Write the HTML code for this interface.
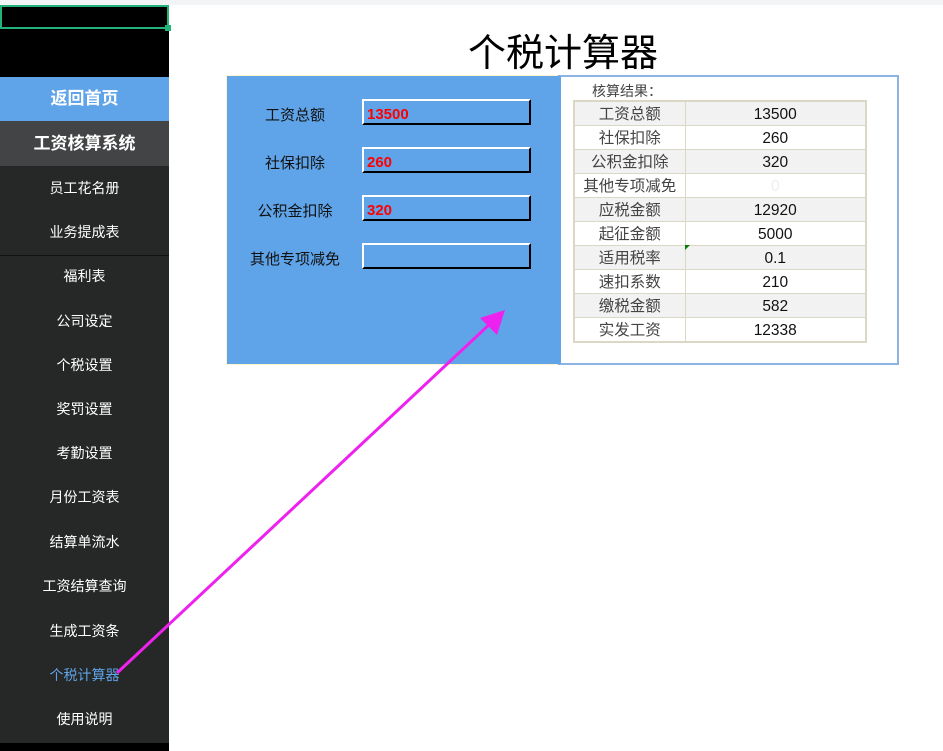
<!DOCTYPE html>
<html><head><meta charset="utf-8"><style>
*{margin:0;padding:0;box-sizing:border-box}
body{width:943px;height:751px;position:relative;background:#fff;overflow:hidden;font-family:"Liberation Sans","Noto Sans CJK SC",sans-serif}
.top{position:absolute;left:0;top:0;width:943px;height:5px;background:#f3f4f6}
.side{position:absolute;left:0;top:5px;width:169px;height:746px;background:#262727}
.blk{position:absolute;left:0;top:5px;width:169px;height:72px;background:#000}
.sel{position:absolute;left:0;top:5px;width:169px;height:24px;border:2px solid #21b37a}
.sel:after{content:"";position:absolute;right:-4px;bottom:-4px;width:6px;height:6px;background:#21b37a}
.home{position:absolute;left:0;top:77px;width:169px;height:44px;background:#5fa4e8;color:#fff;font-weight:bold;font-size:17px;text-align:center;line-height:44px}
.sys{position:absolute;left:0;top:121px;width:169px;height:45px;background:#434445;color:#fff;font-weight:bold;font-size:17px;text-align:center;line-height:45px}
.it{position:absolute;left:0;width:169px;text-align:center;color:#fff;font-size:14px;line-height:20px}
.sep{position:absolute;left:0;top:255px;width:169px;height:1px;background:#111}
.bot{position:absolute;left:0;top:743px;width:169px;height:8px;background:#000}
.title{position:absolute;left:420px;top:31px;width:286px;text-align:center;font-size:38px;line-height:46px;color:#000}
.panel{position:absolute;left:226px;top:75px;width:334px;height:290px;background:#5fa4e8;border:1px solid #fff3c8}
.lab{position:absolute;width:130px;text-align:center;font-size:15px;color:#111;left:230px}
.inp{position:absolute;left:362px;width:169px;height:26px;border-top:2px solid #fff;border-left:2px solid #fff;border-right:2px solid #000;border-bottom:2px solid #000;color:#f00;font-weight:bold;font-size:15px;padding-left:3px;padding-top:3px;line-height:22px}
.res{position:absolute;left:558px;top:75px;width:341px;height:290px;border:2px solid #8db3e2;border-left:3px solid #5fa4e8;background:#fff}
.rl{position:absolute;left:592px;top:81px;font-size:14px;color:#444}
table{position:absolute;left:573px;top:100px;border-collapse:collapse;border:2px solid #dbd7c6}
td{border:1px solid #dbd7c6;height:24px;font-size:15.5px;text-align:center;padding:2px 0 0 0;line-height:21px}
td.a{width:111px;color:#444}
td.b{width:181px;color:#111}
tr:nth-child(odd) td{background:#f2f2f2}
</style></head><body>
<div class="top"></div>
<div class="side"></div>
<div class="blk"></div>
<div class="sel"></div>
<div class="home">返回首页</div>
<div class="sys">工资核算系统</div>
<div class="it" style="top:178px">员工花名册</div>
<div class="it" style="top:222px">业务提成表</div>
<div class="sep"></div>
<div class="it" style="top:266px">福利表</div>
<div class="it" style="top:311px">公司设定</div>
<div class="it" style="top:355px">个税设置</div>
<div class="it" style="top:399px">奖罚设置</div>
<div class="it" style="top:443px">考勤设置</div>
<div class="it" style="top:487px">月份工资表</div>
<div class="it" style="top:532px">结算单流水</div>
<div class="it" style="top:576px">工资结算查询</div>
<div class="it" style="top:621px">生成工资条</div>
<div class="it" style="top:665px;color:#5fa4e8">个税计算器</div>
<div class="it" style="top:709px">使用说明</div>
<div class="bot"></div>
<div class="title">个税计算器</div>
<div class="panel"></div>
<div class="lab" style="top:104px">工资总额</div>
<div class="lab" style="top:152px">社保扣除</div>
<div class="lab" style="top:200px">公积金扣除</div>
<div class="lab" style="top:248px">其他专项减免</div>
<div class="inp" style="top:99px">13500</div>
<div class="inp" style="top:147px">260</div>
<div class="inp" style="top:195px">320</div>
<div class="inp" style="top:243px"></div>
<div class="res"></div>
<div class="rl">核算结果：</div>
<table>
<tr><td class="a">工资总额</td><td class="b">13500</td></tr>
<tr><td class="a">社保扣除</td><td class="b">260</td></tr>
<tr><td class="a">公积金扣除</td><td class="b">320</td></tr>
<tr><td class="a">其他专项减免</td><td class="b" style="color:#eee">0</td></tr>
<tr><td class="a">应税金额</td><td class="b">12920</td></tr>
<tr><td class="a">起征金额</td><td class="b">5000</td></tr>
<tr><td class="a">适用税率</td><td class="b" style="position:relative">0.1<span style="position:absolute;left:-1px;top:-1px;width:0;height:0;border-top:5px solid #0a7a0a;border-right:5px solid transparent"></span></td></tr>
<tr><td class="a">速扣系数</td><td class="b">210</td></tr>
<tr><td class="a">缴税金额</td><td class="b">582</td></tr>
<tr><td class="a">实发工资</td><td class="b">12338</td></tr>
</table>
<svg style="position:absolute;left:0;top:0" width="943" height="751">
<line x1="117" y1="673" x2="492" y2="322" stroke="#ee22ee" stroke-width="3"/>
<polygon points="505,310 480,318 497,335" fill="#ee22ee"/>
</svg>
</body></html>
